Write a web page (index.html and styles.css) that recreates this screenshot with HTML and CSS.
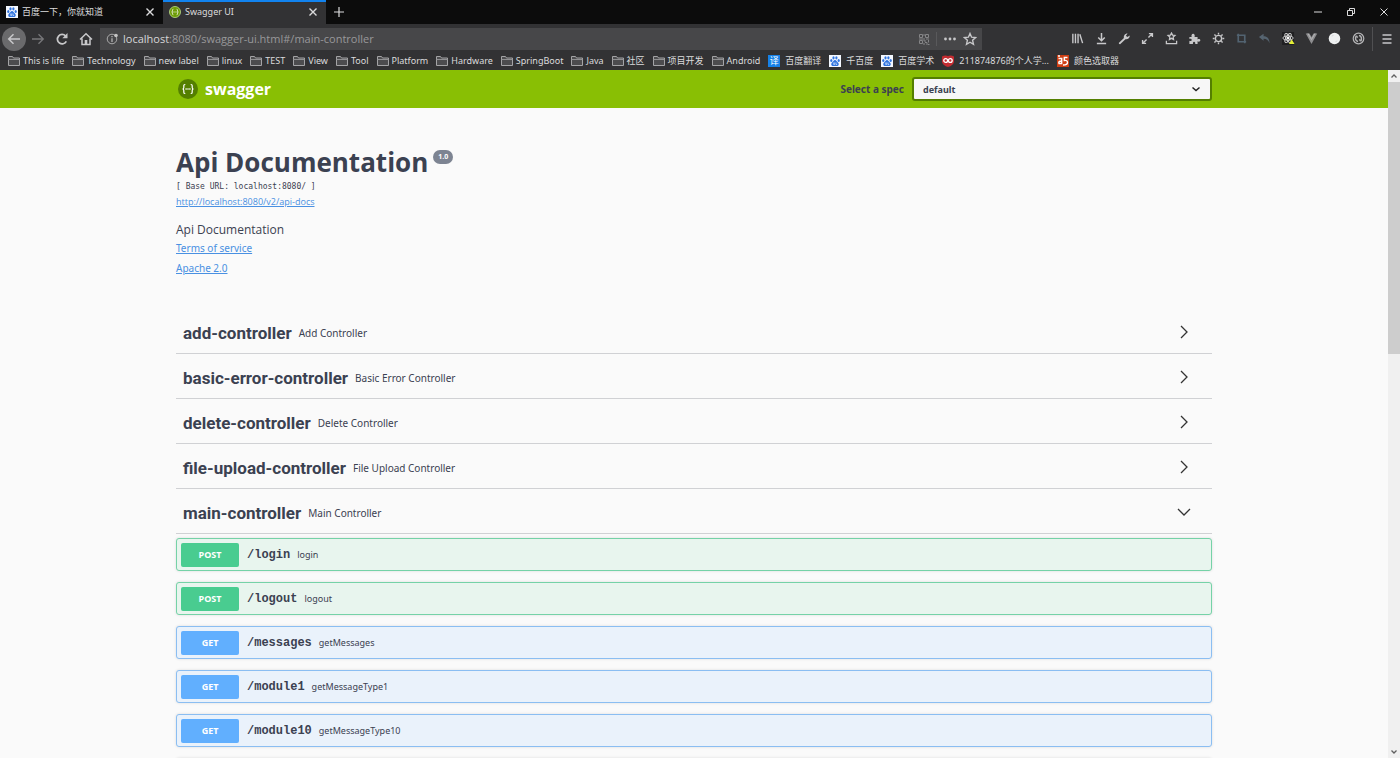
FILE: index.html
```html
<!DOCTYPE html>
<html lang="en">
<head>
<meta charset="utf-8">
<title>Swagger UI</title>
<link rel="stylesheet" href="styles.css">
</head>
<body>
<svg class="defs" aria-hidden="true">
  <symbol id="folder" viewBox="0 0 12 12"><path d="M.5 10.500V1.500h4l1 1.500h6v7.500z" fill="#4c4c4e" stroke="#a4a4a6"/><path d="M.5 4.500h11" stroke="#909092"/></symbol>
  <symbol id="paw" viewBox="0 0 12 12"><rect width="12" height="12" fill="#f4f8ff"/><g fill="#2f74e0"><ellipse cx="2.300" cy="5.500" rx="1.100" ry="1.500"/><ellipse cx="4.500" cy="2.800" rx="1.100" ry="1.600"/><ellipse cx="7.400" cy="2.800" rx="1.100" ry="1.600"/><ellipse cx="9.700" cy="5.500" rx="1.100" ry="1.500"/><path d="M6 5c1.400 0 1.800 1.600 2.900 2.500 1.600 1.400.8 3.600-.9 3.600-.8 0-1.300-.2-2-.2s-1.200.2-2 .2c-1.700 0-2.500-2.200-.9-3.600C4.200 6.600 4.600 5 6 5z"/></g><path d="M4.700 7.500v2h1v-2M7 7.500v2h1.200" stroke="#f4f8ff" stroke-width=".6" fill="none"/></symbol>
  <symbol id="close" viewBox="0 0 10 10"><path d="M1.500 1.500l7 7M8.500 1.500l-7 7" stroke="currentColor" stroke-width="1.400"/></symbol>
  <symbol id="chevron" viewBox="0 0 16 16"><path d="M5 2l6 6-6 6" fill="none" stroke="#333" stroke-width="1.300"/></symbol>
  <symbol id="braces" viewBox="0 0 20 20"><path d="M7.300 5.500H7Q5.800 5.500 5.800 6.800v1.700Q5.800 10 4.500 10q1.300 0 1.300 1.500v1.700q0 1.300 1.200 1.300h.3M12.700 5.500h.3q1.200 0 1.200 1.300v1.700q0 1.500 1.300 1.500-1.300 0-1.300 1.500v1.700q0 1.300-1.200 1.300h-.3" fill="none" stroke="#fff" stroke-width="1.200"/><path d="M7.500 10h5.200" stroke="#fff" stroke-width="1.500" stroke-dasharray="1.200 .7"/></symbol>
</svg>

<header class="browser">
  <div class="tabs">
    <div class="tab"><svg class="fav"><use href="#paw"/></svg><span class="tab-title">百度一下，你就知道</span><button class="tab-close" aria-label="Close tab"><svg><use href="#close"/></svg></button></div>
    <div class="tab active"><svg class="fav" viewBox="0 0 20 20"><circle cx="10" cy="10" r="9.200" fill="#6d9c06" stroke="#b7d987" stroke-width="1.400"/><use href="#braces"/></svg><span class="tab-title">Swagger UI</span><button class="tab-close" aria-label="Close tab"><svg><use href="#close"/></svg></button></div>
    <button class="new-tab" aria-label="New tab"><svg viewBox="0 0 12 12"><path d="M6 1v10M1 6h10" stroke="currentColor" stroke-width="1.200"/></svg></button>
    <div class="window-buttons">
      <button aria-label="Minimize"><svg viewBox="0 0 10 10"><path d="M1 5h8" stroke="currentColor"/></svg></button>
      <button aria-label="Restore"><svg viewBox="0 0 10 10" fill="none" stroke="currentColor"><path d="M1.500 3.500h5v5h-5zM3.500 3V1.500h5v5H7"/></svg></button>
      <button aria-label="Close"><svg viewBox="0 0 10 10"><path d="M1.500 1.500l7 7M8.500 1.500l-7 7" stroke="currentColor"/></svg></button>
    </div>
  </div>

  <div class="nav">
    <div class="nav-buttons">
      <button class="back" aria-label="Back"><svg viewBox="0 0 14 14"><path d="M13 7H2M6.500 2.200L1.700 7l4.800 4.800" fill="none" stroke="currentColor" stroke-width="1.500"/></svg></button>
      <button class="dim" aria-label="Forward"><svg viewBox="0 0 14 14"><path d="M1 7h11M7.500 2.200L12.300 7l-4.800 4.800" fill="none" stroke="currentColor" stroke-width="1.300"/></svg></button>
      <button aria-label="Reload"><svg viewBox="0 0 14 14"><path d="M11.300 9.300A4.700 4.700 0 1 1 10.600 4" fill="none" stroke="currentColor" stroke-width="1.700"/><path d="M12.500 1v5.200H7.300z" fill="currentColor"/></svg></button>
      <button aria-label="Home"><svg viewBox="0 0 14 14"><path d="M1 7.500L7 1.700l6 5.800M3 6.500v6h8v-6" fill="none" stroke="currentColor" stroke-width="1.500"/><path d="M5.700 8h2.600v4.500H5.700z" fill="currentColor"/></svg></button>
    </div>
    <div class="address">
      <svg class="info-icon" viewBox="0 0 12 12"><circle cx="6" cy="6" r="4.800" fill="none" stroke="#aaa"/><path d="M6 5.300V9M6 3v1.200" stroke="#bbb" stroke-width="1.200"/><circle cx="10" cy="2.500" r="1.800" fill="#c4c4c4"/></svg>
      <a class="url" href="#/main-controller"><b>localhost</b>:8080/swagger-ui.html#/main-controller</a>
      <button class="qr" aria-label="QR code"><svg viewBox="0 0 12 12" fill="none" stroke="currentColor"><path d="M1.500 1.500h3v3h-3zM7.500 1.500h3v3h-3zM1.500 7.500h3v3h-3zM6 1v2M1 6h4M6 5v3h2M8 6h3M10.500 7v2.500M7 9.500h2V12M6 10v2M10 11.500h1.500"/></svg></button>
      <span class="address-rule"></span>
      <button aria-label="Page actions"><svg viewBox="0 0 14 14" fill="currentColor"><circle cx="2.500" cy="7" r="1.400"/><circle cx="7" cy="7" r="1.400"/><circle cx="11.500" cy="7" r="1.400"/></svg></button>
      <button aria-label="Bookmark this page"><svg viewBox="0 0 14 14"><path d="M7 1.500l1.600 3.700 4 .4-3 2.700.9 4L7 10.200l-3.500 2.100.9-4-3-2.700 4-.4z" fill="none" stroke="currentColor" stroke-width="1.400"/></svg></button>
    </div>
    <div class="extensions">
      <button aria-label="Library"><svg viewBox="0 0 14 14"><path d="M2 2v10M4.800 2v10M7.600 2v10M9.500 2.500l3 9.500" stroke="currentColor" stroke-width="1.500"/></svg></button>
      <button aria-label="Downloads"><svg viewBox="0 0 14 14"><path d="M7 1v8M3.500 6L7 9.500 10.500 6M2 12.500h10" fill="none" stroke="currentColor" stroke-width="1.600"/></svg></button>
      <button aria-label="Developer tools"><svg viewBox="0 0 14 14"><path d="M1.200 12.800l-.4-.9 5.600-5.500C5.800 4 7.300 1.500 10.300 1.500L8.500 4l1.500 1.500 2.700-1.600c.1 2.800-2.200 4.300-4.700 3.900l-5.700 5.300z" fill="currentColor"/></svg></button>
      <button aria-label="Full screen"><svg viewBox="0 0 14 14"><path d="M8 6l4-4M8.500 1.700h3.800v3.800M6 8l-4 4M1.700 8.500v3.800h3.800" fill="none" stroke="currentColor" stroke-width="1.500"/></svg></button>
      <button aria-label="Bookmarks menu"><svg viewBox="0 0 14 14"><path d="M7 1.200l1.100 2.200 2.600.3-1.900 1.800.4 2.500L7 6.800 4.800 8l.4-2.500-1.900-1.800 2.600-.3zM1.500 9.500v3h11v-3" fill="none" stroke="currentColor" stroke-width="1.400"/></svg></button>
      <button aria-label="Add-ons"><svg viewBox="0 0 14 14"><path d="M1.500 5.500H4C3.200 3.800 4 1.800 5.500 1.800S7.800 3.800 7 5.500h3.300V8c1-.8 3-.5 3 1s-2 1.800-3 1v3H7.700c.5-1.600-.2-2.600-1.200-2.600S5 11.400 5.400 13H1.500V9.500c1.500.6 2.500-.1 2.500-1S3 7 1.500 7.600z" fill="currentColor"/></svg></button>
      <button aria-label="Options"><svg viewBox="0 0 14 14" fill="none" stroke="currentColor"><circle cx="7" cy="7" r="3.400" stroke-width="1.500"/><path d="M7 .8v2M7 11.200v2M.8 7h2M11.200 7h2M2.600 2.600L4 4M10 10l1.400 1.400M2.600 11.400L4 10M10 4l1.400-1.400" stroke-width="1.500"/></svg></button>
      <button class="crop" aria-label="Screenshot"><svg viewBox="0 0 14 14"><path d="M3.500 2v8.500H12M2 3.500h8.500V12" fill="none" stroke="currentColor" stroke-width="1.800"/></svg></button>
      <button class="undo" aria-label="Undo close tab"><svg viewBox="0 0 14 14"><path d="M1 5.500L6 2v2.500c4 0 6.500 2.500 6.300 7.500C11.300 9 9.500 7.500 6 7.300V9.500z" fill="currentColor"/></svg></button>
      <button aria-label="React tools"><svg viewBox="0 0 14 14"><rect width="13" height="14" fill="#202022"/><g fill="none" stroke="#d8d8d8"><ellipse cx="6.500" cy="6.500" rx="5.500" ry="2.200"/><ellipse cx="6.500" cy="6.500" rx="5.500" ry="2.200" transform="rotate(60 6.500 6.500)"/><ellipse cx="6.500" cy="6.500" rx="5.500" ry="2.200" transform="rotate(120 6.500 6.500)"/></g><circle cx="6.500" cy="6.500" r="1.300" fill="#fff"/><path d="M10.500 8l3 5h-6z" fill="#e4ef36"/></svg></button>
      <button aria-label="Vue tools"><svg viewBox="0 0 14 14"><path d="M.8 1.500h4L7 5.500l2.200-4h4L7 12.800z" fill="#8e8e90"/><path d="M3.200 1.500L7 8.200l3.800-6.700" fill="none" stroke="#b8b8ba"/></svg></button>
      <button aria-label="Globe"><svg viewBox="0 0 14 14"><circle cx="7" cy="7" r="6.200" fill="#eef0f0"/><path d="M4 4.500l2-1M8 10.500l2-1" stroke="#d2d5d6"/></svg></button>
      <button aria-label="Sync"><svg viewBox="0 0 14 14" fill="none" stroke="#b4b4b6"><circle cx="7" cy="7" r="5.700" stroke-width="1.300"/><path d="M6.500 10.200a3.200 3.200 0 0 1-1.500-5.700M7.500 3.800A3.200 3.200 0 0 1 9 9.500" stroke-width="1.600"/><path d="M3.500 4.500h2.200v2M10.500 9.500H8.300v-2"/></svg></button>
    </div>
    <button class="menu" aria-label="Open menu"><svg viewBox="0 0 14 14"><path d="M2.500 3h9M2.500 7h9M2.500 11h9" stroke="currentColor" stroke-width="1.500"/></svg></button>
  </div>

  <nav class="bookmarks">
    <a href="#"><svg><use href="#folder"/></svg>This is life</a>
    <a href="#"><svg><use href="#folder"/></svg>Technology</a>
    <a href="#"><svg><use href="#folder"/></svg>new label</a>
    <a href="#"><svg><use href="#folder"/></svg>linux</a>
    <a href="#"><svg><use href="#folder"/></svg>TEST</a>
    <a href="#"><svg><use href="#folder"/></svg>View</a>
    <a href="#"><svg><use href="#folder"/></svg>Tool</a>
    <a href="#"><svg><use href="#folder"/></svg>Platform</a>
    <a href="#"><svg><use href="#folder"/></svg>Hardware</a>
    <a href="#"><svg><use href="#folder"/></svg>SpringBoot</a>
    <a href="#"><svg><use href="#folder"/></svg>Java</a>
    <a href="#"><svg><use href="#folder"/></svg>社区</a>
    <a href="#"><svg><use href="#folder"/></svg>项目开发</a>
    <a href="#"><svg><use href="#folder"/></svg>Android</a>
    <a class="site" href="#"><span class="translate">译</span>百度翻译</a>
    <a class="site" href="#"><svg><use href="#paw"/></svg>千百度</a>
    <a class="site" href="#"><svg><use href="#paw"/></svg>百度学术</a>
    <a class="site" href="#"><svg viewBox="0 0 12 12"><path d="M0 1.500Q3-.3 6 1q3-1.300 6 .5V7q-1 3.500-6 5Q1 10.500 0 7z" fill="#c42c31"/><g fill="none" stroke="#fff" stroke-width="1.300"><circle cx="3.700" cy="5.500" r="1.900"/><circle cx="8.300" cy="5.500" r="1.900"/></g></svg>211874876的个人学...</a>
    <a class="site" href="#"><svg viewBox="0 0 12 12"><rect width="12" height="12" fill="#cf3e13"/><path d="M1.500 3.500h3.200v5H2q-1-2.500 2.700-2.500M10.500 2.500H7.300v3q3.200-.5 3.200 2T6 10M1 1h2" fill="none" stroke="#fff" stroke-width="1.400"/></svg>颜色选取器</a>
  </nav>
</header>

<div class="viewport">
  <div class="page">
    <div class="topbar">
      <div class="wrapper topbar-inner">
        <a class="logo" href="#"><svg viewBox="0 0 20 20"><circle cx="10" cy="10" r="10" fill="#547f00"/><use href="#braces"/></svg>swagger</a>
        <form class="spec"><label for="spec">Select a spec</label><select id="spec"><option>default</option></select></form>
      </div>
    </div>
    <main class="wrapper">
      <section class="info">
        <h1>Api Documentation<sup class="version">1.0</sup></h1>
        <div class="base-url">[ Base URL: localhost:8080/ ]</div>
        <a class="docs-link" href="#">http://localhost:8080/v2/api-docs</a>
        <p>Api Documentation</p>
        <a class="info-link" href="#">Terms of service</a>
        <a class="info-link" href="#">Apache 2.0</a>
      </section>
      <section>
        <h2 class="tag">add-controller<small>Add Controller</small><button aria-label="Expand"><svg><use href="#chevron"/></svg></button></h2>
        <h2 class="tag">basic-error-controller<small>Basic Error Controller</small><button aria-label="Expand"><svg><use href="#chevron"/></svg></button></h2>
        <h2 class="tag">delete-controller<small>Delete Controller</small><button aria-label="Expand"><svg><use href="#chevron"/></svg></button></h2>
        <h2 class="tag">file-upload-controller<small>File Upload Controller</small><button aria-label="Expand"><svg><use href="#chevron"/></svg></button></h2>
        <h2 class="tag open">main-controller<small>Main Controller</small><button aria-label="Collapse"><svg><use href="#chevron"/></svg></button></h2>
        <div class="operations">
          <div class="op post"><button class="method">POST</button><span class="path">/login</span><span class="summary">login</span></div>
          <div class="op post"><button class="method">POST</button><span class="path">/logout</span><span class="summary">logout</span></div>
          <div class="op get"><button class="method">GET</button><span class="path">/messages</span><span class="summary">getMessages</span></div>
          <div class="op get"><button class="method">GET</button><span class="path">/module1</span><span class="summary">getMessageType1</span></div>
          <div class="op get"><button class="method">GET</button><span class="path">/module10</span><span class="summary">getMessageType10</span></div>
          <div class="op get"></div>
        </div>
      </section>
    </main>
  </div>
  <div class="scrollbar" aria-hidden="true">
    <svg viewBox="0 0 12 12"><path d="M3.500 7.500L6 5l2.500 2.500" fill="none" stroke="#606060" stroke-width="1.300"/></svg>
    <div class="track"><div class="thumb"></div></div>
    <svg viewBox="0 0 12 12"><path d="M3.500 4.500L6 7l2.500-2.500" fill="none" stroke="#606060" stroke-width="1.300"/></svg>
  </div>
</div>
</body>
</html>
```
FILE: styles.css
```css
* { box-sizing: border-box; }

body {
  margin: 0;
  height: 100vh;
  display: flex;
  flex-direction: column;
  overflow: hidden;
  background: #fafafa;
  color: #3b4151;
  font-family: "Noto Sans", "Noto Sans CJK SC", sans-serif;
}

button {
  display: inline-flex;
  align-items: center;
  justify-content: center;
  padding: 0;
  border: 0;
  background: none;
  color: inherit;
  font: inherit;
}

svg { display: block; flex: none; }
.defs { position: absolute; width: 0; height: 0; }

/* Browser frame */
.browser {
  flex: none;
  background: #323234;
  color: #dcdcdd;
  font-size: 9px;
}

.tabs { display: flex; height: 24px; background: #0c0c0c; }
.tab {
  display: flex;
  align-items: center;
  gap: 4px;
  width: 163px;
  padding: 0 8px 0 6px;
}
.tab.active { background: #323234; box-shadow: inset 0 2px #1283ef; }
.fav { width: 12px; height: 12px; }
.tab-title { flex: 1; line-height: 14px; }
.tab-close, .tab-close svg { width: 10px; height: 10px; }
.new-tab { width: 26px; }
.new-tab svg { width: 12px; height: 12px; }
.window-buttons { display: flex; margin-left: auto; }
.window-buttons button { width: 33px; }
.window-buttons svg { width: 10px; height: 10px; }

.nav { display: flex; align-items: center; height: 28px; padding-top: 1px; color: #c8c8ca; }
.nav svg { width: 14px; height: 14px; }
.nav-buttons { display: flex; align-items: center; width: 100px; padding-left: 2px; }
.nav-buttons button { width: 24px; height: 24px; }
.nav-buttons .back { border-radius: 50%; background: #6a6a6c; }
.nav-buttons .dim { color: #78787a; }
.address {
  flex: 1;
  display: flex;
  align-items: center;
  height: 22px;
  padding: 0 2px 0 6px;
  background: #474749;
}
.address .info-icon { width: 12px; height: 12px; }
.url {
  flex: 1;
  padding-left: 5px;
  color: #98989a;
  font-family: "Open Sans", sans-serif;
  font-size: 11px;
  line-height: 16px;
  text-decoration: none;
}
.url b { color: #d6d6d8; font-weight: 400; }
.address button { width: 20px; }
.address .qr { color: #858587; }
.address .qr svg { width: 12px; height: 12px; }
.address-rule { width: 1px; height: 14px; margin: 0 3px 0 2px; background: #59595b; }
.extensions { display: flex; width: 304px; margin-left: 84px; margin-right: 2px; }
.extensions button { flex: 1; }
.extensions svg { width: 13px; height: 13px; }
.extensions .crop { color: #526371; }
.extensions .undo { color: #566470; }
.menu { width: 28px; height: 24px; border-left: 1px solid #505052; }

.bookmarks { display: flex; align-items: center; gap: 8px; height: 18px; padding: 0 8px; }
.bookmarks a {
  display: flex;
  align-items: center;
  gap: 3px;
  color: inherit;
  line-height: 14px;
  text-decoration: none;
  white-space: nowrap;
}
.bookmarks .site { gap: 5px; }
.bookmarks svg, .translate { width: 12px; height: 12px; }
.translate { background: #1681e8; color: #fff; line-height: 12px; text-align: center; }

/* Page */
.viewport { flex: 1; min-height: 0; display: flex; }
.page { flex: 1; overflow: hidden; }
.wrapper { max-width: 1036px; margin: 0 auto; }

.topbar { background: #89bf04; }
.topbar-inner { display: flex; align-items: center; justify-content: space-between; height: 38px; }
.logo {
  display: flex;
  align-items: center;
  gap: 7px;
  padding-left: 2px;
  color: #fff;
  font: 700 16px "Open Sans", sans-serif;
  text-decoration: none;
}
.logo svg { width: 20px; height: 20px; }
.spec { display: flex; align-items: center; gap: 8px; font-size: 10px; font-weight: 700; }
.spec select {
  appearance: none;
  width: 300px;
  height: 24px;
  padding: 0 9px;
  border: 2px solid #547f00;
  border-radius: 3px;
  background: #f7f7f7 url('data:image/svg+xml,<svg xmlns="http://www.w3.org/2000/svg" viewBox="0 0 10 10"><path d="M1.500 3.500L5 6.500l3.500-3" fill="none" stroke="%23222" stroke-width="1.500"/></svg>') right 9px center / 10px 10px no-repeat;
  color: #3b4151;
  font: 700 9px "Noto Sans", sans-serif;
}

.info { display: flex; flex-direction: column; align-items: flex-start; padding: 36px 0 31px; }
.info h1 { display: flex; align-items: flex-start; gap: 5px; margin: 0; font: 700 26px/36px "Open Sans", sans-serif; }
.version {
  margin-top: 6px;
  padding: 0 5px;
  border-radius: 7px;
  background: #7d8492;
  color: #fff;
  font-size: 7px;
  line-height: 14px;
}
.base-url { font: 8px/14px "DejaVu Sans Mono", monospace; }
.info a { color: #4990e2; }
.docs-link { font: 9px/16px "Open Sans", sans-serif; }
.info p { margin: 12px 0 0; font: 12px/16px "Open Sans", sans-serif; }
.info-link { font-size: 10px; line-height: 20px; }

.tag {
  display: flex;
  align-items: center;
  gap: 7px;
  height: 45px;
  margin: 0;
  padding: 4px 20px 0 7px;
  border-bottom: 1px solid #d0d1d4;
  font: 700 17px Roboto, sans-serif;
}
.tag small { font: 10px "Noto Sans", sans-serif; }
.tag button { margin-left: auto; padding-bottom: 2px; }
.tag svg { width: 16px; height: 16px; }
.tag.open svg { transform: rotate(90deg); }

.operations { display: flex; flex-direction: column; gap: 11px; padding-top: 4px; }
.op {
  display: flex;
  align-items: center;
  height: 33px;
  padding: 0 4px;
  border: 1px solid;
  border-radius: 3px;
  box-shadow: 0 0 3px rgba(0, 0, 0, .12);
}
.method {
  width: 58px;
  height: 24px;
  border-radius: 2px;
  color: #fff;
  font-size: 9px;
  font-weight: 700;
}
.path { padding: 1px 7px 0 8px; font: 700 12px "Liberation Mono", monospace; }
.summary { font-size: 9px; }
.post { border-color: #75d2a7; background: #e8f5ee; }
.post .method { background: #49cc90; }
.get { border-color: #8bbef2; background: #eaf2fb; }
.get .method { background: #61affe; }

.scrollbar { display: flex; flex-direction: column; width: 12px; background: #f0f0f0; }
.scrollbar svg { width: 12px; height: 12px; }
.track { flex: 1; }
.thumb { height: 41%; background: #cdcdcd; }
```
